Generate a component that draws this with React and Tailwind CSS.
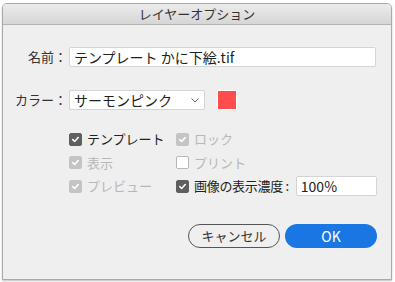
import { useState } from "react";

function Check({ checked, disabled, label, children }) {
  return (
    <label className={"flex items-center gap-[5px] " + (disabled ? "text-[#b8b8b8]" : "text-[#222]")}>
      <span
        className={
          "flex h-[13px] w-[13px] items-center justify-center rounded-[2px] border " +
          (checked
            ? disabled
              ? "border-[#c4c4c4] bg-[#c4c4c4]"
              : "border-[#5f5f5f] bg-[#5f5f5f]"
            : "border-[#b8b8b8] bg-white")
        }
      >
        {checked && (
          <svg width="9" height="9" viewBox="0 0 10 10">
            <path d="M2 5.2 L4.1 7.2 L8 2.8" fill="none" stroke="white" strokeWidth="1.8" strokeLinecap="round" strokeLinejoin="round" />
          </svg>
        )}
      </span>
      <span>{label}</span>
      {children}
    </label>
  );
}

export default function App() {
  const [name, setName] = useState("テンプレート かに下絵.tif");

  return (
    <div
      className="h-[282px] w-[395px] bg-white pl-[2px] pt-[3px] text-[13px]"
      style={{ fontFamily: '"Noto Sans CJK JP", "Noto Sans", sans-serif' }}
    >
      <div className="flex h-[277px] w-[390px] flex-col overflow-hidden rounded-t-[5px] border border-[#a9a9a9] bg-[#efefef] shadow-[0_1px_2px_rgba(0,0,0,0.25)]">
        <div className="flex h-[21px] items-center justify-center border-b border-[#b3b3b3] bg-gradient-to-b from-[#ececec] to-[#d6d6d6] text-[13px] text-[#333]">
          レイヤーオプション
        </div>

        <div className="flex flex-col pt-[22px]">
          <div className="flex h-[20px] items-center">
            <div className="w-[66px] pr-[2px] text-right text-[#333]">名前：</div>
            <input
              value={name}
              onChange={(e) => setName(e.target.value)}
              className="h-[20px] w-[307px] rounded-[2px] border border-[#d4d4d4] bg-white px-[4px] text-[14px] text-[#222] outline-none"
            />
          </div>

          <div className="mt-[23px] flex h-[20px] items-center">
            <div className="w-[66px] pr-[2px] text-right text-[#333]">カラー：</div>
            <div className="flex h-[20px] w-[136px] items-center justify-between rounded-[2px] border border-[#d4d4d4] bg-white pl-[4px] pr-[5px] text-[14px] text-[#222]">
              <span>サーモンピンク</span>
              <svg width="8" height="5" viewBox="0 0 8 5">
                <path d="M0.5 0.5 L4 4 L7.5 0.5" fill="none" stroke="#666" strokeWidth="1" />
              </svg>
            </div>
            <div className="ml-[12px] h-[20px] w-[20px] border border-white bg-[#ff4d4d]" />
          </div>

          <div className="mt-[21px] grid grid-cols-[107px_1fr] gap-y-[7.5px] pl-[66px] text-[13px]">
            <div className="flex h-[16px] items-center">
              <Check checked label="テンプレート" />
            </div>
            <div className="flex h-[16px] items-center">
              <Check checked disabled label="ロック" />
            </div>
            <div className="flex h-[16px] items-center">
              <Check checked disabled label="表示" />
            </div>
            <div className="flex h-[16px] items-center">
              <Check disabled label="プリント" />
            </div>
            <div className="flex h-[16px] items-center">
              <Check checked disabled label="プレビュー" />
            </div>
            <div className="flex h-[16px] items-center">
              <Check checked label={<span className="tracking-[-0.3px]">画像の表示濃度 :</span>}>
                <div className="ml-[2px] flex h-[20px] w-[81px] items-center rounded-[2px] border border-[#d4d4d4] bg-white px-[4px] text-[14px] text-[#222]">
                  100%
                </div>
              </Check>
            </div>
          </div>

          <div className="mt-[30px] flex justify-end gap-[5px] pr-[14px]">
            <button className="h-[24px] w-[92px] rounded-full border border-[#555] bg-[#efefef] text-[13px] text-[#333]">
              キャンセル
            </button>
            <button className="h-[24px] w-[92px] rounded-full bg-[#1a76e3] text-[14px] text-white">
              OK
            </button>
          </div>
        </div>
      </div>
    </div>
  );
}
